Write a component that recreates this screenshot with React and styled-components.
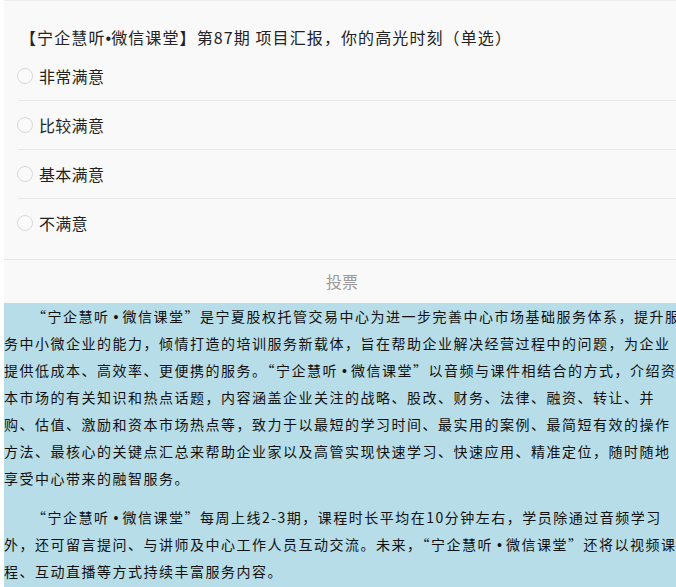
import React from "react";
import styled, { createGlobalStyle } from "styled-components";

const Global = createGlobalStyle`
  html, body { margin: 0; padding: 0; background: #fff; overflow: hidden; }
  body { font-family: "Noto Sans CJK SC", "Noto Sans", sans-serif; }
`;

const Page = styled.div`
  width: 676px;
  padding-left: 4px;
`;

const Card = styled.div`
  background: #f9f9f9;
  border-top: 1px solid #ececec;
`;

const Title = styled.div`
  padding: 24px 14px 0 16px;
  font-size: 16px;
  line-height: 24px;
  height: 24px;
  letter-spacing: 1.1px;
  color: #222;
  white-space: nowrap;
`;

const Dot = styled.span`
  font-family: "Liberation Sans", Arial, sans-serif;
  line-height: 1;
  letter-spacing: 0;
  margin: 0 ${(p) => p.$gap || "0px"};
`;

const Options = styled.ul`
  list-style: none;
  margin: 0;
  padding: 3px 0 12px 14px;
  border-bottom: 1px solid #e6e6e6;
`;

const Option = styled.li`
  display: flex;
  align-items: center;
  gap: 6px;
  height: 48px;
  font-size: 16px;
  letter-spacing: 0.3px;
  color: #222;
  border-top: ${(p) => (p.$first ? "none" : "1px solid #e8e8e8")};
`;

const Radio = styled.span`
  width: 16px;
  height: 16px;
  margin-left: -1px;
  border: 1px solid #d8d8d8;
  border-radius: 50%;
  background: #fafafa;
  box-sizing: border-box;
  flex: none;
`;

const Vote = styled.div`
  height: 43px;
  display: flex;
  align-items: center;
  justify-content: center;
  padding-bottom: 2px;
  box-sizing: border-box;
  font-size: 16px;
  color: #999;
`;

const Article = styled.div`
  background: #b7dde8;
  padding: 0 0 4px 0;
`;

const Para = styled.p`
  margin: 0 0 12px 0;
  font-size: 14px;
  line-height: 27px;
  letter-spacing: 1.5px;
  color: #111;
  white-space: nowrap;
  text-indent: 2em;
  overflow: hidden;
`;

const options = ["非常满意", "比较满意", "基本满意", "不满意"];

const Brand = ({ gap }) => (
  <>
    宁企慧听<Dot $gap={gap}>•</Dot>微信课堂
  </>
);

export default function App() {
  return (
    <Page>
      <Global />
      <Card>
        <Title>
          【<Brand gap="0px" />】第87期 项目汇报，你的高光时刻（单选）
        </Title>
        <Options>
          {options.map((o, i) => (
            <Option key={o} $first={i === 0}>
              <Radio />
              {o}
            </Option>
          ))}
        </Options>
        <Vote>投票</Vote>
      </Card>
      <Article>
        <Para>
          “<Brand gap="4px" />”是宁夏股权托管交易中心为进一步完善中心市场基础服务体系，提升服
          <br />务中小微企业的能力，倾情打造的培训服务新载体，旨在帮助企业解决经营过程中的问题，为企业
          <br />提供低成本、高效率、更便携的服务。“<Brand gap="4px" />”以音频与课件相结合的方式，介绍资
          <br />本市场的有关知识和热点话题，内容涵盖企业关注的战略、股改、财务、法律、融资、转让、并
          <br />购、估值、激励和资本市场热点等，致力于以最短的学习时间、最实用的案例、最简短有效的操作
          <br />方法、最核心的关键点汇总来帮助企业家以及高管实现快速学习、快速应用、精准定位，随时随地
          <br />享受中心带来的融智服务。
        </Para>
        <Para>
          “<Brand gap="4px" />”每周上线2-3期，课程时长平均在10分钟左右，学员除通过音频学习
          <br />外，还可留言提问、与讲师及中心工作人员互动交流。未来，“<Brand gap="4px" />”还将以视频课
          <br />程、互动直播等方式持续丰富服务内容。
        </Para>
      </Article>
    </Page>
  );
}
